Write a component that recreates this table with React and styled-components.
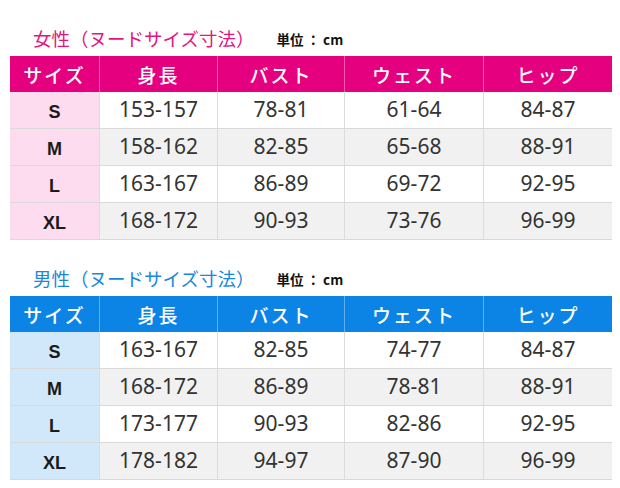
import styled, { createGlobalStyle } from 'styled-components';

const GlobalStyle = createGlobalStyle`
  body {
    margin: 0;
    background: #fff;
    font-family: "Noto Sans", "Noto Sans CJK JP", sans-serif;
  }
`

const themes = {
  female: { main: '#e4007f', light: '#fcdcee', title: '#e4147f' },
  male: { main: '#0b84e6', light: '#d1e8fb', title: '#1a86dc' },
}

const Page = styled.div`
  width: 620px;
  padding: 26px 0 0 10px;
  box-sizing: border-box;
`

const Section = styled.section`
  & + & {
    margin-top: 26px;
  }
`

const TitleRow = styled.div`
  display: flex;
  align-items: center;
  gap: 22px;
  height: 24px;
  padding-left: 23px;
  margin-bottom: 6px;
`

const Title = styled.h2`
  margin: 0;
  font-family: "Noto Sans CJK JP", sans-serif;
  font-size: 18.5px;
  font-weight: 400;
  color: ${p => p.$color};
  line-height: 24px;
`

const Unit = styled.span`
  font-family: "Noto Sans CJK JP", sans-serif;
  font-size: 13.5px;
  font-weight: 700;
  color: #111;
  padding-top: 2px;
  white-space: pre;
`

const Table = styled.div`
  display: grid;
  grid-template-columns: 89px 118px 127px 139px 129px;
  width: 602px;
`

const HeadCell = styled.div`
  height: 36px;
  display: flex;
  align-items: center;
  justify-content: center;
  background: ${p => p.$color};
  color: #fff;
  font-family: "Noto Sans CJK JP", sans-serif;
  font-size: 19px;
  font-weight: 500;
  letter-spacing: 2px;
  border-left: 1px solid rgba(255, 255, 255, 0.35);
  box-sizing: border-box;

  &:first-child {
    border-left: none;
  }
`

const SizeCell = styled.div`
  height: 37px;
  display: flex;
  align-items: center;
  justify-content: center;
  padding-top: 5px;
  box-sizing: border-box;
  background: ${p => p.$color};
  border-bottom: 1px solid #d9d9d9;
  font-family: "Liberation Sans", Arial, sans-serif;
  font-weight: 700;
  font-size: 18px;
  color: #1a1a1a;
`

const Cell = styled.div`
  height: 37px;
  display: flex;
  align-items: center;
  justify-content: center;
  box-sizing: border-box;
  background: ${p => (p.$alt ? '#f1f1f1' : '#fff')};
  border-bottom: 1px solid #d9d9d9;
  border-left: 1px solid #dcdcdc;
  font-size: 21px;
  color: #333;
  padding-bottom: 2px;
`

const headers = ['サイズ', '身長', 'バスト', 'ウェスト', 'ヒップ']

const charts = [
  {
    key: 'female',
    title: '女性（ヌードサイズ寸法）',
    rows: [
      ['S', '153-157', '78-81', '61-64', '84-87'],
      ['M', '158-162', '82-85', '65-68', '88-91'],
      ['L', '163-167', '86-89', '69-72', '92-95'],
      ['XL', '168-172', '90-93', '73-76', '96-99'],
    ],
  },
  {
    key: 'male',
    title: '男性（ヌードサイズ寸法）',
    rows: [
      ['S', '163-167', '82-85', '74-77', '84-87'],
      ['M', '168-172', '86-89', '78-81', '88-91'],
      ['L', '173-177', '90-93', '82-86', '92-95'],
      ['XL', '178-182', '94-97', '87-90', '96-99'],
    ],
  },
]

function SizeChart({ chart }) {
  const theme = themes[chart.key]
  return (
    <Section>
      <TitleRow>
        <Title $color={theme.title}>{chart.title}</Title>
        <Unit>単位 ： cm</Unit>
      </TitleRow>
      <Table>
        {headers.map(h => (
          <HeadCell key={h} $color={theme.main}>{h}</HeadCell>
        ))}
        {chart.rows.map((row, i) => [
          <SizeCell key={row[0]} $color={theme.light}>{row[0]}</SizeCell>,
          ...row.slice(1).map((v, j) => (
            <Cell key={row[0] + j} $alt={i % 2 === 1}>{v}</Cell>
          )),
        ])}
      </Table>
    </Section>
  )
}

function App() {
  return (
    <Page>
      <GlobalStyle />
      {charts.map(c => (
        <SizeChart key={c.key} chart={c} />
      ))}
    </Page>
  )
}

export default App
